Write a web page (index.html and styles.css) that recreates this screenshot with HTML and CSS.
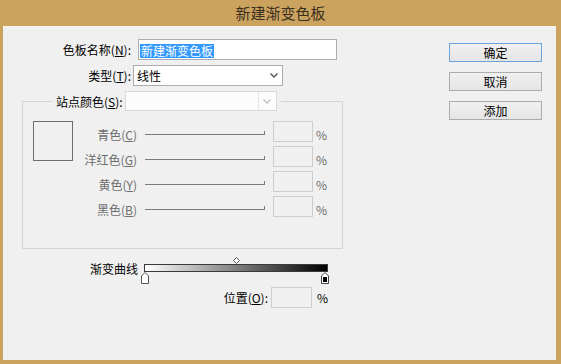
FILE: index.html
```html
<!DOCTYPE html>
<html lang="zh-CN">

<head>
    <meta charset="UTF-8">
    <title>新建渐变色板</title>
    <link rel="stylesheet" href="styles.css">
</head>

<body>
    <div class="window">
        <div class="titlebar">新建渐变色板</div>

        <div class="client">
            <div class="main">
                <div class="field">
                    <label class="lbl">色板名称(<u>N</u>):</label>
                    <div class="textbox"><span class="sel">新建渐变色板</span></div>
                </div>

                <div class="field">
                    <label class="lbl">类型(<u>T</u>):</label>
                    <div class="combo">
                        <span>线性</span>
                        <svg class="chev" width="8" height="5" viewBox="0 0 8 5">
                            <polyline points="0.5,0.5 4,4 7.5,0.5" fill="none" stroke="#555" stroke-width="1.4" />
                        </svg>
                    </div>
                </div>

                <fieldset class="group">
                    <legend>
                        <div class="group-head">
                            <label class="head-lbl">站点颜色(<u>S</u>):</label>
                            <div class="combo-off">
                                <span class="combo-btn">
                                    <svg width="8" height="5" viewBox="0 0 8 5">
                                        <polyline points="0.5,0.5 4,4 7.5,0.5" fill="none" stroke="#c2c2c2" stroke-width="1.4" />
                                    </svg>
                                </span>
                            </div>
                        </div>
                    </legend>

                    <div class="group-body">
                        <div class="swatch"></div>
                        <div class="sliders">
                            <div class="slider-row">
                                <span class="s-lbl">青色(<u>C</u>)</span>
                                <span class="track"></span>
                                <span class="num"></span>
                                <span class="pct">%</span>
                            </div>
                            <div class="slider-row">
                                <span class="s-lbl">洋红色(<u>G</u>)</span>
                                <span class="track"></span>
                                <span class="num"></span>
                                <span class="pct">%</span>
                            </div>
                            <div class="slider-row">
                                <span class="s-lbl">黄色(<u>Y</u>)</span>
                                <span class="track"></span>
                                <span class="num"></span>
                                <span class="pct">%</span>
                            </div>
                            <div class="slider-row">
                                <span class="s-lbl">黑色(<u>B</u>)</span>
                                <span class="track"></span>
                                <span class="num"></span>
                                <span class="pct">%</span>
                            </div>
                        </div>
                    </div>
                </fieldset>

                <div class="curve-row">
                    <span class="curve-lbl">渐变曲线</span>
                    <div class="curve">
                        <div class="marker">
                            <svg width="7" height="7" viewBox="0 0 7 7">
                                <polygon points="3.5,0.5 6.5,3.5 3.5,6.5 0.5,3.5" fill="#fff" stroke="#555" />
                            </svg>
                        </div>
                        <div class="ramp"></div>
                        <div class="stops">
                            <svg width="8" height="12" viewBox="0 0 8 12">
                                <path d="M4 0.5 L7.5 4 V11.5 H0.5 V4 Z" fill="#fff" stroke="#555" />
                            </svg>
                            <svg width="8" height="12" viewBox="0 0 8 12">
                                <path d="M4 0.5 L7.5 4 V11.5 H0.5 V4 Z" fill="#fff" stroke="#444" />
                                <rect x="2" y="5" width="4" height="5" fill="#000" />
                            </svg>
                        </div>
                    </div>
                </div>

                <div class="pos-row">
                    <label class="pos-lbl">位置(<u>O</u>):</label>
                    <span class="num pos-num"></span>
                    <span class="pos-pct">%</span>
                </div>
            </div>

            <div class="actions">
                <button class="btn btn-default">确定</button>
                <button class="btn">取消</button>
                <button class="btn">添加</button>
            </div>
        </div>
    </div>
</body>

</html>
```

FILE: styles.css
```css
*{
    box-sizing: border-box;
}
body{
    margin: 0;
    background: #cca35e;
    font-family: "Noto Sans CJK SC", "Noto Sans", sans-serif;
    font-size: 12px;
    color: #000;
}
.window{
    width: 561px;
    height: 364px;
    display: flex;
    flex-direction: column;
}
.titlebar{
    height: 26px;
    line-height: 25px;
    text-align: center;
    font-size: 15px;
    color: #3a2f1f;
}
.client{
    flex: 1;
    margin: 0 5px 4px 3px;
    background: #f0f0f0;
    box-shadow: inset 0 1px 0 #fbf7f0;
    display: flex;
}
.main{
    width: 340px;
    padding: 13px 0 0 19px;
}
.field{
    display: flex;
    height: 21px;
    margin-bottom: 5px;
}
.lbl{
    width: 109px;
    text-align: right;
    line-height: 21px;
    white-space: nowrap;
}
.textbox{
    margin-left: 7px;
    width: 199px;
    height: 21px;
    border: 1px solid #abadb3;
    background: #fff;
    padding: 2px 1px;
}
.sel{
    display: inline-block;
    background: #3399ff;
    color: #fff;
    line-height: 14px;
    padding: 0 1px;
}
.combo{
    margin-left: 2px;
    width: 150px;
    height: 21px;
    border: 1px solid #acacac;
    background: #fff;
    display: flex;
    align-items: center;
    padding-left: 3px;
}
.chev{
    margin-left: auto;
    margin-right: 4px;
}

/* 站点颜色 group */
.group{
    width: 321px;
    margin: 0;
    padding: 10px 10px 31px;
    border: 1px solid #d5d5d5;
    min-width: 0;
}
.group legend{
    margin-left: 19px;
    padding: 0 4px;
}
.group-head{
    display: flex;
    align-items: center;
    height: 20px;
}
.head-lbl{
    white-space: nowrap;
}
.combo-off{
    margin-left: 2px;
    width: 152px;
    height: 20px;
    border: 1px solid #d9d9d9;
    background: #fcfcfc;
    display: flex;
    justify-content: flex-end;
}
.combo-btn{
    width: 18px;
    border-left: 1px solid #e6e6e6;
    display: flex;
    align-items: center;
    justify-content: center;
}
.group-body{
    display: flex;
}
.swatch{
    width: 40px;
    height: 40px;
    border: 1px solid #6e6e6e;
}
.slider-row{
    display: flex;
    height: 21px;
    margin-bottom: 4px;
}
.slider-row:last-child{
    margin-bottom: 0;
}
.s-lbl{
    width: 64px;
    text-align: right;
    line-height: 20px;
    padding-top: 4px;
    color: #6d6d6d;
    white-space: nowrap;
}
.track{
    box-sizing: content-box;
    width: 119px;
    height: 3px;
    margin: 10px 8px 0;
    border-bottom: 1px solid #7a7a7a;
    border-right: 1px solid #7a7a7a;
}
.num{
    width: 40px;
    height: 21px;
    border: 1px solid #cdcdcd;
    background: #f0f0f0;
}
.pct{
    margin-left: 3px;
    line-height: 20px;
    padding-top: 4px;
    color: #6d6d6d;
}

/* gradient curve */
.curve-row{
    display: flex;
    margin-top: 7px;
}
.curve-lbl{
    width: 116px;
    text-align: right;
    line-height: 16px;
    padding-top: 5px;
}
.curve{
    width: 189px;
    margin-left: 3px;
}
.marker{
    height: 8px;
    padding: 1px 0 0 92px;
    display: flex;
}
.ramp{
    height: 8px;
    margin: 0 2px 0 3px;
    border: 1px solid #3a3a3a;
    background: linear-gradient(to right, #fff, #000);
}
.stops{
    height: 12px;
    display: flex;
    justify-content: space-between;
    padding-right: 1px;
}
.stops svg{
    display: block;
}
.pos-row{
    display: flex;
    height: 21px;
    margin-top: 3px;
}
.pos-lbl{
    width: 246px;
    text-align: right;
    line-height: 21px;
}
.pos-num{
    margin-left: 3px;
    width: 41px;
}
.pos-pct{
    margin-left: 5px;
    line-height: 21px;
}

/* buttons */
.actions{
    margin-left: auto;
    padding: 17px 14px 0 0;
    display: flex;
    flex-direction: column;
}
.btn{
    width: 93px;
    height: 19px;
    margin: 0 0 10px;
    padding: 0;
    border: 1px solid #acacac;
    background: linear-gradient(#f0f0f0, #e5e5e5);
    font-family: inherit;
    font-size: 12px;
    line-height: 16px;
    color: #000;
}
.btn-default{
    border-color: #6aa4dc;
}
```
